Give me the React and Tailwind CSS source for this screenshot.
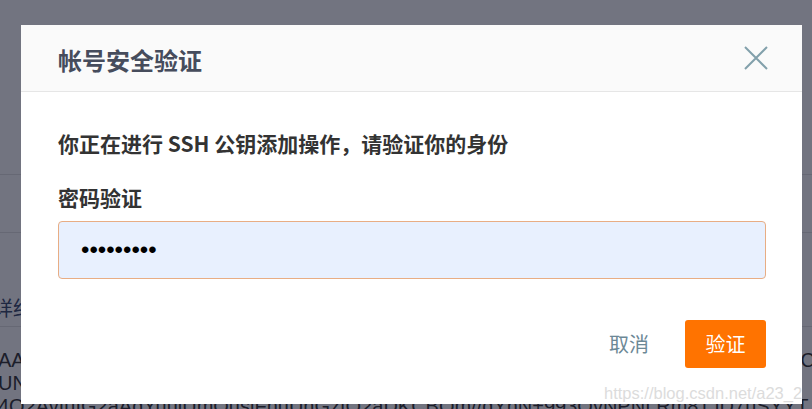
export default function App() {
  const keyLines = [
    "AAAAB3NzaC1yc2EAAAADAQABAAABAQDWc8fVq1Ks9GxR2pZyT0LmHcNaQpE4u7XbC",
    "UNgqK2Wm9sP3Jd0aFvYt5LrEoZxHc8BnT1MqG7wRkSdA4yVuIeJpX6hN2Ofu",
    "4Q2AvfuIG2aAdYuulUmQusiFnuUnGzfQ2aDKCBQm//qYhN+993QvNPNLRm81JD7uSYYT",
  ];

  return (
    <div className="relative w-[812px] h-[409px] overflow-hidden bg-white font-['Noto_Sans_CJK_SC',sans-serif]">
      {/* page behind the dialog */}
      <div className="flex flex-col text-[#333]">
        <div className="h-[175px] border-b border-[#e3e3e3]" />
        <div className="h-[58px] border-b border-[#e3e3e3]" />
        <div className="h-[94px] border-b border-[#e3e3e3] flex items-end pb-[6px] overflow-hidden">
          <span className="-ml-[7px] text-[20px] leading-[24px] text-[#3a4a6b] whitespace-nowrap">详细信息</span>
        </div>
        <div className="pt-[22px] flex flex-col font-['Liberation_Sans',sans-serif] text-[20px] leading-[23px] whitespace-nowrap overflow-hidden">
          {keyLines.map((line) => (
            <div key={line} className="-ml-[2px]">{line}</div>
          ))}
        </div>
      </div>

      {/* overlay */}
      <div className="absolute inset-0 bg-[rgba(12,16,36,0.58)] pt-[25px] pl-[21px]">
        <div className="relative w-[781px] h-[379px] bg-white overflow-hidden flex flex-col">
          {/* header */}
          <div className="h-[67px] shrink-0 bg-[#fafafa] border-b border-[#e6e6e6] flex items-center justify-between pl-[37px] pr-[34px]">
            <h2 className="text-[24px] font-bold text-[#464c5c] leading-none pt-[3px]">帐号安全验证</h2>
            <button className="w-[24px] h-[24px] text-[#82a0ab]">
              <svg viewBox="0 0 24 24" width="24" height="24" fill="none" stroke="currentColor" strokeWidth="2">
                <path d="M1 1 L23 23 M23 1 L1 23" />
              </svg>
            </button>
          </div>

          {/* body */}
          <div className="flex flex-col pl-[37px] pr-[36px] pt-[37px]">
            <p className="text-[21px] leading-[28px] font-bold text-[#333]">
              你正在进行 SSH 公钥添加操作，请验证你的身份
            </p>
            <label className="mt-[26px] text-[21px] leading-[28px] font-bold text-[#333]">密码验证</label>
            <input
              type="password"
              readOnly
              value="123456789"
              className="mt-[10px] h-[58px] w-full rounded-[4px] border border-[#e8ad84] bg-[#e8f0fe] px-[22px] text-[24px] font-['Liberation_Sans',sans-serif] text-black outline-none"
            />
            <div className="mt-[41px] flex items-center justify-end gap-[36px]">
              <button className="text-[20px] text-[#6c8896] leading-none">取消</button>
              <button className="w-[81px] h-[48px] rounded-[3px] bg-[#ff7300] text-white text-[20px] leading-none">验证</button>
            </div>
          </div>

          {/* watermark */}
          <span className="absolute left-[583px] top-[356px] font-['Liberation_Sans',sans-serif] text-[16.5px] text-[#dcdcdc] whitespace-nowrap">
            https://blog.csdn.net/a23_2391
          </span>
        </div>
      </div>
    </div>
  );
}
